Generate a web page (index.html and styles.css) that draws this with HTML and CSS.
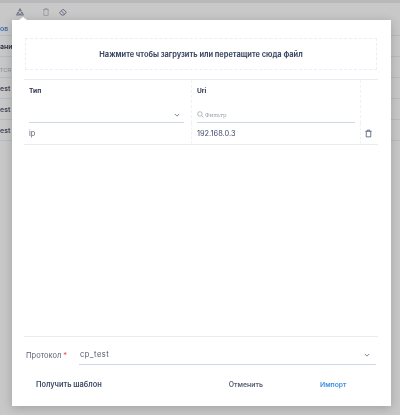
FILE: index.html
```html
<!DOCTYPE html>
<html lang="ru">
<head>
<meta charset="utf-8">
<title>Импорт</title>
<link rel="stylesheet" href="styles.css">
</head>
<body>
<div class="page">
  <div class="toolbar">
    <svg class="tool-icon dark" viewBox="0 0 10 10"><path d="M5 .8 6.7 3.8H3.3ZM2.7 5 4.5 8.8H.7ZM7.3 5 9.3 8.8H5.5Z"/></svg>
    <svg class="tool-icon trash-icon" viewBox="0 0 10 10"><path d="M1.5 2h7M3.5 2V.8h3V2M2.3 2v7.2h5.4V2"/></svg>
    <svg class="tool-icon dark eraser" viewBox="0 0 10 10"><path d="M.8 5.8 5 1.5l4.2 3.6-3 3.7H3.2ZM3 3.6l3.8 3.8"/></svg>
  </div>
  <div class="bg-rows">
    <div class="bg-row link">ов</div>
    <div class="bg-row strong">ани</div>
    <div class="bg-row faint">тся</div>
    <div class="bg-row">est</div>
    <div class="bg-row">est</div>
    <div class="bg-row">est</div>
  </div>
</div>
<div class="overlay">
  <div class="modal">
    <div class="dropzone">Нажмите чтобы загрузить или перетащите сюда файл</div>
    <div class="table">
      <div class="cell head type-head">
        <div class="col-title">Тип</div>
        <div class="filter select-filter">
          <svg class="chevron" viewBox="0 0 8 5"><path d="M1 1l3 3 3-3"/></svg>
        </div>
      </div>
      <div class="cell head uri-head">
        <div class="col-title">Uri</div>
        <div class="filter text-filter">
          <svg class="search" viewBox="0 0 10 10"><circle cx="4.2" cy="4.2" r="3.2"/><path d="M6.6 6.6 9.2 9.2"/></svg>
          <span class="placeholder">Фильтр</span>
        </div>
      </div>
      <div class="cell head action-head"></div>
      <div class="cell body-cell">ip</div>
      <div class="cell body-cell uri-cell">192.168.0.3</div>
      <div class="cell body-cell action-cell">
        <svg class="row-trash" viewBox="0 0 12 12"><path d="M2 3h8M4.5 3V1.5h3V3M3 3v7.5h6V3"/></svg>
      </div>
    </div>
    <div class="spacer"></div>
    <div class="protocol">
      <label class="protocol-label">Протокол <span class="req">*</span></label>
      <div class="protocol-select">
        <span>cp_test</span>
        <svg class="chevron" viewBox="0 0 8 5"><path d="M1 1l3 3 3-3"/></svg>
      </div>
    </div>
    <div class="actions">
      <button class="btn template">Получить шаблон</button>
      <button class="btn cancel">Отменить</button>
      <button class="btn import">Импорт</button>
    </div>
  </div>
</div>
</body>
</html>
```

FILE: styles.css
```css
* { box-sizing: border-box; }
html, body { margin: 0; height: 415px; overflow: hidden; }
body {
  position: relative;
  width: 400px;
  font-family: "Inter", "Liberation Sans", sans-serif;
  background: #c8c8c9;
  color: #3d4a66;
  filter: blur(0.45px);
}
.page { height: 415px; border-top: 3px solid #b9b9bc; }
.toolbar { display: flex; padding: 5px 0 0 16px; height: 17px; }
.tool-icon { width: 8px; height: 8px; fill: none; stroke: #8c8f98; stroke-width: .9; flex: none; }
.tool-icon.dark { stroke: #4a5068; }
.trash-icon { margin-left: 18px; }
.eraser { margin-left: 9px; }
.bg-rows { font-size: 7px; font-weight: 600; }
.bg-row { height: 21px; line-height: 21px; color: #474b59; border-bottom: 1px solid #b4bcc6; }
.bg-row.link { height: 16px; line-height: 18px; color: #3f6aa8; }
.bg-row.strong { color: #2c3245; }
.bg-row.faint { line-height: 26px; color: #90929a; font-weight: 400; }
.overlay { position: absolute; left: 12px; top: 20px; width: 379px; height: 386px; }
.overlay::before {
  content: "";
  position: absolute;
  left: 7px; top: -3px;
  border-left: 4px solid transparent;
  border-right: 4px solid transparent;
  border-bottom: 3px solid #fff;
}
.modal {
  height: 100%;
  background: #fff;
  box-shadow: 0 2px 10px rgba(0,0,0,.2);
  padding: 18px 13px 15px 12px;
  display: flex;
  flex-direction: column;
}
.dropzone {
  height: 32px;
  margin: 0 1px;
  border: 1px dashed #eceef3;
  font-size: 7.4px;
  font-weight: 700;
  color: #3d4a66;
  display: flex;
  align-items: center;
  justify-content: center;
}
.table {
  margin-top: 9px;
  display: grid;
  grid-template-columns: 168px 169px 1fr;
  grid-template-rows: 43px 21px;
  border-top: 1px solid #e8edf4;
  border-bottom: 1px solid #e8edf4;
}
.cell { border-right: 1px dashed #f0f2f6; }
.cell:nth-child(3n) { border-right: 0; }
.head { padding: 7px 7px 0 5px; display: flex; flex-direction: column; justify-content: space-between; }
.col-title { font-size: 6.6px; font-weight: 700; color: #2f3850; }
.filter { height: 16px; border-bottom: 1px solid #ccd8e8; display: flex; align-items: center; }
.select-filter { justify-content: flex-end; padding-right: 4px; }
.text-filter { gap: 1px; }
.uri-head { padding-right: 5px; }
.chevron { width: 6px; height: 4px; fill: none; stroke: #565c70; stroke-width: 1; }
.search { width: 7px; height: 7px; fill: none; stroke: #8a90a0; stroke-width: .9; }
.placeholder { font-family: "DejaVu Serif", "Liberation Serif", serif; font-size: 5.6px; color: #9aa0ad; }
.body-cell { font-size: 7.4px; color: #555d70; display: flex; align-items: center; padding-left: 5px; }
.uri-cell { color: #3d4a66; }
.action-cell { justify-content: center; padding: 0 3px 0 0; }
.row-trash { width: 9px; height: 9px; fill: none; stroke: #3d4a66; stroke-width: 1; }
.spacer { flex: 1; border-bottom: 1px solid #e8edf4; }
.protocol { display: flex; align-items: center; margin-top: 8px; height: 20px; }
.protocol-label { width: 55px; font-size: 7.5px; color: #5a6278; white-space: nowrap; padding-left: 2px; }
.req { color: #e5484d; }
.protocol-select {
  flex: 1;
  height: 20px;
  margin-right: 2px;
  border-bottom: 1px solid #ccd8e8;
  display: flex;
  align-items: center;
  justify-content: space-between;
  font-size: 7.5px;
  color: #4c5468;
  padding: 0 6px 0 1px;
  letter-spacing: .55px;
}
.actions { display: flex; align-items: center; margin-top: 12px; height: 14px; }
.btn { border: 0; background: none; padding: 0; font: inherit; font-size: 7.4px; font-weight: 600; color: #3d4a66; }
.template { margin-left: 12px; }
.cancel { margin-left: 127px; font-size: 6.9px; color: #565e72; }
.import { margin-left: 57px; font-size: 6.8px; color: #3b8fe0; }
```
